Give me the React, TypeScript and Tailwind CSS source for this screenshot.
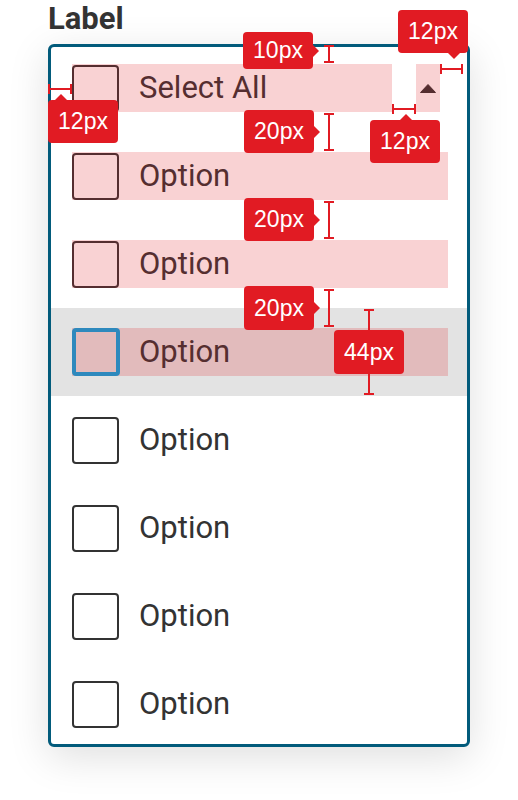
import React from "react";

type Ptr = { side: "right" | "up" | "down"; at?: number };

function Tag({ x, y, h = 43, text, ptr }: { x: number; y: number; h?: number; text: string; ptr?: Ptr }) {
  return (
    <div
      className="absolute w-[70px] rounded-[4px] bg-[#e11b23] text-white text-[23px] leading-none flex items-center justify-center font-['Liberation_Sans',Arial,sans-serif]"
      style={{ left: x, top: y, height: h }}
    >
      {text}
      {ptr && ptr.side === "right" && (
        <svg className="absolute" width="8" height="14" viewBox="0 0 8 14" style={{ left: 69, top: h / 2 - 7 }}>
          <path d="M0 0 L7 7 L0 14 Z" fill="#e11b23" />
        </svg>
      )}
      {ptr && ptr.side === "up" && (
        <svg className="absolute" width="14" height="8" viewBox="0 0 14 8" style={{ left: (ptr.at ?? 35) - 7, top: -7 }}>
          <path d="M0 8 L7 1 L14 8 Z" fill="#e11b23" />
        </svg>
      )}
      {ptr && ptr.side === "down" && (
        <svg className="absolute" width="14" height="8" viewBox="0 0 14 8" style={{ left: (ptr.at ?? 35) - 7, top: h - 1 }}>
          <path d="M0 0 L7 7 L14 0 Z" fill="#e11b23" />
        </svg>
      )}
    </div>
  );
}

function VBeam({ x, y1, y2 }: { x: number; y1: number; y2: number }) {
  return (
    <div className="absolute w-[10px] flex flex-col items-center" style={{ left: x - 5, top: y1, height: y2 - y1 }}>
      <div className="w-[10px] h-[2px] bg-[#e11b23]" />
      <div className="w-[2px] flex-1 bg-[#e11b23]" />
      <div className="w-[10px] h-[2px] bg-[#e11b23]" />
    </div>
  );
}

function HBeam({ y, x1, x2 }: { y: number; x1: number; x2: number }) {
  return (
    <div className="absolute h-[10px] flex flex-row items-center" style={{ top: y - 5, left: x1, width: x2 - x1 }}>
      <div className="h-[10px] w-[2px] bg-[#e11b23]" />
      <div className="h-[2px] flex-1 bg-[#e11b23]" />
      <div className="h-[10px] w-[2px] bg-[#e11b23]" />
    </div>
  );
}

function Box({ tinted }: { tinted?: boolean }) {
  return (
    <div
      className={
        "w-[47px] h-[47px] shrink-0 rounded-[4px] border-2 " +
        (tinted ? "border-[#552e30]" : "border-[#333333]")
      }
    />
  );
}

function OptionRow({ kind, pad }: { kind: "pink" | "hover" | "plain"; pad: string }) {
  if (kind === "hover") {
    return (
      <div className={"bg-[#e3e3e3] pl-[21px] pr-[19px] " + pad}>
        <div className="h-[48px] bg-[#e2bbbc] flex items-center gap-[19px]">
          <div className="w-[48px] h-[48px] shrink-0 rounded-[4px] border-4 border-[#2e89bd]" />
          <span className="text-[31px] leading-[40px] -mt-[1px] text-[#552e30]">Option</span>
        </div>
      </div>
    );
  }
  const pink = kind === "pink";
  return (
    <div className={"pl-[21px] pr-[19px] " + pad}>
      <div className={"h-[48px] flex items-center gap-[20px] " + (pink ? "bg-[#f9d2d3]" : "")}>
        <Box tinted={pink} />
        <span className={"text-[31px] leading-[40px] -mt-[1px] " + (pink ? "text-[#552e30]" : "text-[#333333]")}>Option</span>
      </div>
    </div>
  );
}

export default function App() {
  return (
    <div className="relative w-[518px] h-[800px] overflow-hidden bg-white font-['Roboto',sans-serif]">
      <div className="pl-[48px]">
        <div className="text-[31px] leading-[37px] font-bold text-[#333333]">Label</div>
        <div className="mt-[7px] w-[422px] h-[703px] border-[3px] border-[#025b7b] rounded-[6px] bg-white shadow-[0_10px_40px_rgba(0,0,0,0.13)] overflow-hidden flex flex-col">
          <div className="pl-[21px] pt-[17px] pb-[20px] flex items-center gap-[24px]">
            <div className="w-[320px] h-[48px] bg-[#f9d2d3] flex items-center gap-[20px]">
              <Box tinted />
              <span className="text-[31px] leading-[40px] -mt-[1px] text-[#552e30]">Select All</span>
            </div>
            <div className="w-[24px] h-[48px] bg-[#f9d2d3] flex items-center justify-center">
              <svg width="18" height="10" viewBox="0 0 18 10">
                <path d="M1.5 9.5 L9 1.5 L16.5 9.5 Z" fill="#552e30" stroke="#552e30" strokeWidth="1" strokeLinejoin="round" />
              </svg>
            </div>
          </div>
          <OptionRow kind="pink" pad="py-[20px]" />
          <OptionRow kind="pink" pad="py-[20px]" />
          <OptionRow kind="hover" pad="py-[20px]" />
          <OptionRow kind="plain" pad="py-[20px]" />
          <OptionRow kind="plain" pad="py-[20px]" />
          <OptionRow kind="plain" pad="py-[20px]" />
          <OptionRow kind="plain" pad="pt-[20px] pb-[16px]" />
        </div>
      </div>

      {/* redline annotations */}
      <HBeam y={69} x1={440} x2={463} />
      <VBeam x={329} y1={45} y2={63} />
      <HBeam y={89} x1={48} x2={72} />
      <HBeam y={109} x1={392} x2={416} />
      <VBeam x={329} y1={113} y2={151} />
      <VBeam x={329} y1={201} y2={239} />
      <VBeam x={329} y1={289} y2={327} />
      <VBeam x={369} y1={309} y2={395} />

      <Tag x={398} y={10} text="12px" ptr={{ side: "down", at: 56 }} />
      <Tag x={243} y={32} h={37} text="10px" ptr={{ side: "right" }} />
      <Tag x={48} y={100} text="12px" ptr={{ side: "up", at: 13 }} />
      <Tag x={370} y={120} text="12px" ptr={{ side: "up", at: 36 }} />
      <Tag x={244} y={110} text="20px" ptr={{ side: "right" }} />
      <Tag x={244} y={198} text="20px" ptr={{ side: "right" }} />
      <Tag x={244} y={286} h={44} text="20px" ptr={{ side: "right" }} />
      <Tag x={334} y={330} h={44} text="44px" />
    </div>
  );
}
